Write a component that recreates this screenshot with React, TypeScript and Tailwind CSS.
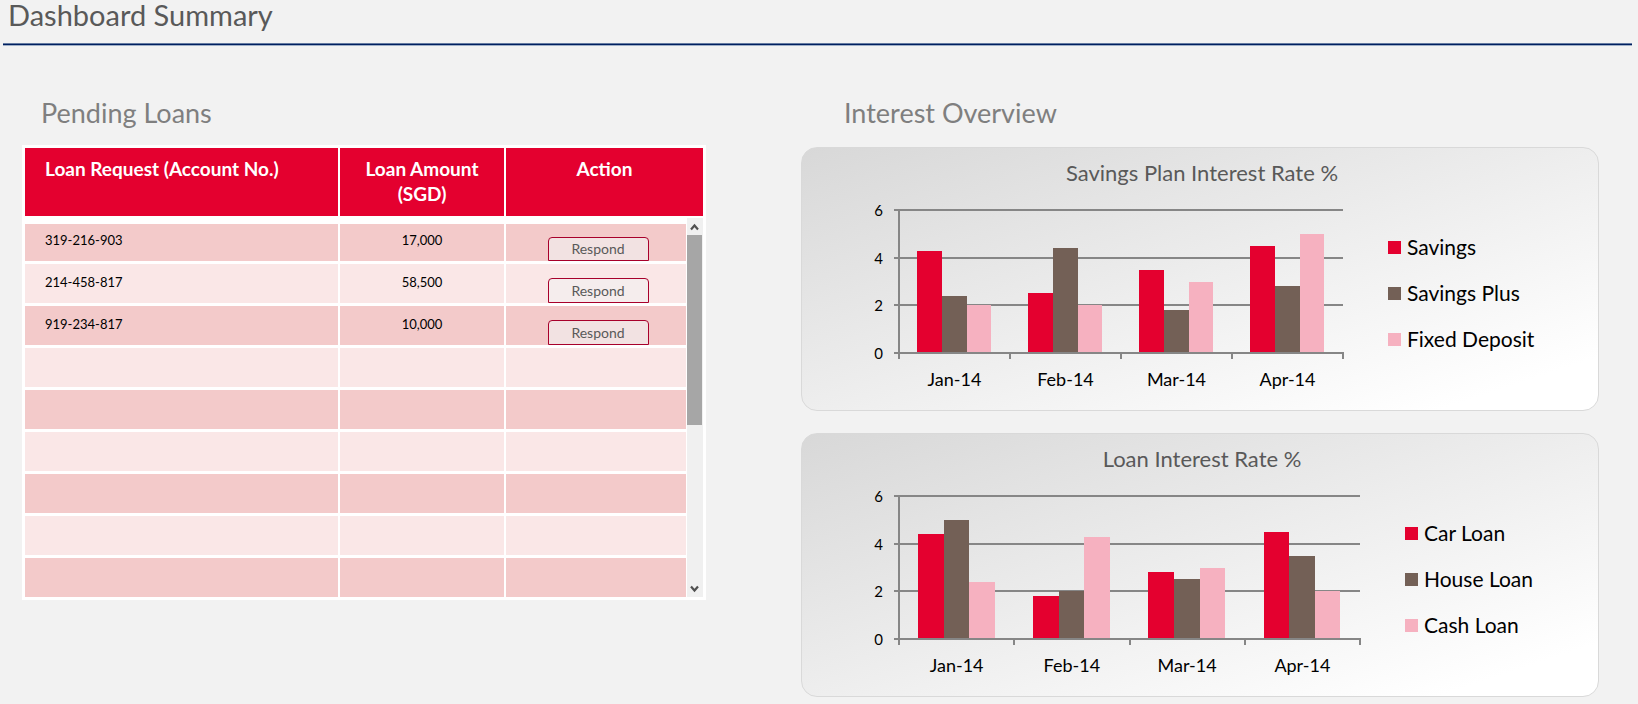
import React from "react";

type Series = { name: string; color: string; swatch: string; values: number[] };

const MONTHS = ["Jan-14", "Feb-14", "Mar-14", "Apr-14"];

const SAVINGS: Series[] = [
  { name: "Savings", color: "#e4002f", swatch: "bg-[#e4002f]", values: [4.3, 2.5, 3.5, 4.5] },
  { name: "Savings Plus", color: "#736056", swatch: "bg-[#736056]", values: [2.4, 4.4, 1.8, 2.8] },
  { name: "Fixed Deposit", color: "#f6b1c0", swatch: "bg-[#f6b1c0]", values: [2, 2, 3, 5] },
];

const LOANS: Series[] = [
  { name: "Car Loan", color: "#e4002f", swatch: "bg-[#e4002f]", values: [4.4, 1.8, 2.8, 4.5] },
  { name: "House Loan", color: "#736056", swatch: "bg-[#736056]", values: [5, 2, 2.5, 3.5] },
  { name: "Cash Loan", color: "#f6b1c0", swatch: "bg-[#f6b1c0]", values: [2.4, 4.3, 3, 2] },
];

const REQUESTS = [
  { account: "319-216-903", amount: "17,000" },
  { account: "214-458-817", amount: "58,500" },
  { account: "919-234-817", amount: "10,000" },
  null,
  null,
  null,
  null,
  null,
  null,
];

function BarChart({ series, plotWidth, label }: { series: Series[]; plotWidth: number; label: string }) {
  const left = 29;
  const top = 23;
  const plotHeight = 143;
  const base = top + plotHeight;
  const y = (v: number) => Math.round(base - (v / 6) * plotHeight);
  const group = plotWidth / MONTHS.length;
  const bar = group / 4.5;
  const width = left + plotWidth + 3;
  const barEdge = (m: number, n: number) => Math.round(left - 0.3 + m * group + bar * (0.75 + n));
  return (
    <svg
      role="img"
      aria-label={label}
      width={width}
      height={210}
      viewBox={`0 0 ${width} 210`}
      className="h-auto max-w-full shrink"
      shapeRendering="crispEdges"
    >
      {[2, 4, 6].map((v) => (
        <rect key={v} x={left} y={y(v) - 1} width={plotWidth} height={2} fill="#868686" />
      ))}
      {MONTHS.map((month, m) =>
        series.map((s, i) => (
          <rect
            key={month + s.name}
            x={barEdge(m, i)}
            y={y(s.values[m])}
            width={barEdge(m, i + 1) - barEdge(m, i)}
            height={base - y(s.values[m])}
            fill={s.color}
          />
        ))
      )}
      <rect x={left - 1} y={top - 1} width={2} height={plotHeight + 7} fill="#868686" />
      <rect x={left} y={base - 1} width={plotWidth + 1} height={2} fill="#868686" />
      {MONTHS.map((month, m) => (
        <rect key={month} x={Math.round(left + (m + 1) * group) - 1} y={base} width={2} height={6} fill="#868686" />
      ))}
      {[0, 2, 4, 6].map((v) => (
        <g key={v}>
          <rect x={left - 5} y={y(v) - 1} width={5} height={2} fill="#868686" />
          <text x={13} y={y(v) + 6} textAnchor="end" fontSize={15}>
            {v}
          </text>
        </g>
      ))}
      {MONTHS.map((month, m) => (
        <text key={month} x={left + (m + 0.5) * group} y={base + 33} textAnchor="middle" fontSize={18}>
          {month}
        </text>
      ))}
    </svg>
  );
}

function ChartCard({ title, series, plotWidth }: { title: string; series: Series[]; plotWidth: number }) {
  return (
    <section className="h-[264px] rounded-2xl border border-[#d9d9d9] bg-linear-to-br from-[#d8d8d8] to-white to-90% pt-[11px] pl-[68px]">
      <h3 className="pr-[64px] text-center text-[22px] leading-7 text-[#595959]">{title}</h3>
      <div className="flex items-start">
        <BarChart series={series} plotWidth={plotWidth} label={title} />
        <ul className="mt-[37px] ml-[42px] shrink-0">
          {series.map((s) => (
            <li key={s.name} className="flex h-[46px] items-center gap-1.5 text-[21px]">
              <span className={`size-[13px] ${s.swatch}`} />
              {s.name}
            </li>
          ))}
        </ul>
      </div>
    </section>
  );
}

function Columns() {
  return (
    <colgroup>
      <col className="w-[315px]" />
      <col className="w-[166px]" />
      <col />
    </colgroup>
  );
}

function Chevron({ d }: { d: string }) {
  return (
    <svg width="9" height="8" viewBox="0 0 9 8" fill="none" stroke="#505050" strokeWidth="2.2" aria-hidden="true">
      <path d={d} />
    </svg>
  );
}

function LoanTable() {
  return (
    <div className="bg-white px-[3px] pt-[3px]">
      <table className="w-full table-fixed border-separate border-spacing-0">
        <Columns />
        <thead>
          <tr className="h-[68px] bg-[#e4002f] align-top text-[19px] leading-[25px] font-bold text-white">
            <th scope="col" className="border-r-2 border-white pt-2 pl-5 text-left">
              Loan Request (Account No.)
            </th>
            <th scope="col" className="border-r-2 border-white px-5 pt-2">
              Loan Amount (SGD)
            </th>
            <th scope="col" className="pt-2">
              Action
            </th>
          </tr>
        </thead>
      </table>
      <div className="flex pt-0.5">
        <div className="min-w-0 flex-1 pt-1.5">
          <table className="w-full table-fixed border-separate border-spacing-0" aria-label="Pending loans">
            <Columns />
            <tbody>
              {REQUESTS.map((r, i) => (
                <tr
                  key={i}
                  className={`text-[13px] ${i === 0 ? "h-10 leading-8" : "h-[42px] leading-9"} ${
                    i % 2 === 0 ? "bg-[#f3caca]" : "bg-[#fae7e7]"
                  }`}
                >
                  <td className="border-r-2 border-b-[3px] border-white py-0 pl-5 align-top">{r?.account}</td>
                  <td className="border-r-2 border-b-[3px] border-white p-0 text-center align-top">{r?.amount}</td>
                  <td className="border-b-[3px] border-white py-0 pl-1 text-center align-bottom">
                    {r && (
                      <button
                        type="button"
                        className={`mx-auto block w-[101px] rounded-t border border-[#a8002b] bg-[#f2f2f2]/60 text-sm text-[#595959] ${
                          i === 0 ? "h-6 leading-[22px]" : "h-[25px] leading-6"
                        }`}
                      >
                        Respond
                      </button>
                    )}
                  </td>
                </tr>
              ))}
            </tbody>
          </table>
        </div>
        <div className="mb-[3px] ml-px flex w-4 flex-col items-center bg-[#f0f0f0]">
          <button type="button" aria-label="Scroll up" className="flex h-[17px] w-full items-center justify-center pr-0.5">
            <Chevron d="M1 6.5 4.5 2.5 8 6.5" />
          </button>
          <div className="h-[190px] w-full border-r border-[#f0f0f0] bg-[#a6a6a6]" />
          <button
            type="button"
            aria-label="Scroll down"
            className="mt-auto flex h-[17px] w-full items-center justify-center pr-0.5"
          >
            <Chevron d="M1 1.5 4.5 5.5 8 1.5" />
          </button>
        </div>
      </div>
    </div>
  );
}

export default function App() {
  return (
    <div className="min-h-screen bg-[#f2f2f2] font-['Lato',sans-serif] text-black">
      <header className="pr-1.5 pl-[3px]">
        <h1 className="pl-[5px] text-[29px] leading-[30px] text-[#595959]">Dashboard Summary</h1>
        <div className="mt-[13px] h-[3px] border-t border-b border-t-[#657ba1] border-b-[#9fafc6] bg-[#002060]" />
      </header>
      <main className="grid grid-cols-[minmax(0,684fr)_minmax(0,798fr)] items-start gap-x-[95px] pt-[50px] pr-[39px] pl-[22px]">
        <section>
          <h2 className="mb-[15px] pl-[19px] text-[27px] leading-[34px] text-[#7f7f7f]">Pending Loans</h2>
          <LoanTable />
        </section>
        <section>
          <h2 className="mb-[17px] pl-[43px] text-[27px] leading-[34px] text-[#7f7f7f]">Interest Overview</h2>
          <div className="flex flex-col gap-[22px]">
            <ChartCard title="Savings Plan Interest Rate %" series={SAVINGS} plotWidth={444} />
            <ChartCard title="Loan Interest Rate %" series={LOANS} plotWidth={461} />
          </div>
        </section>
      </main>
    </div>
  );
}
